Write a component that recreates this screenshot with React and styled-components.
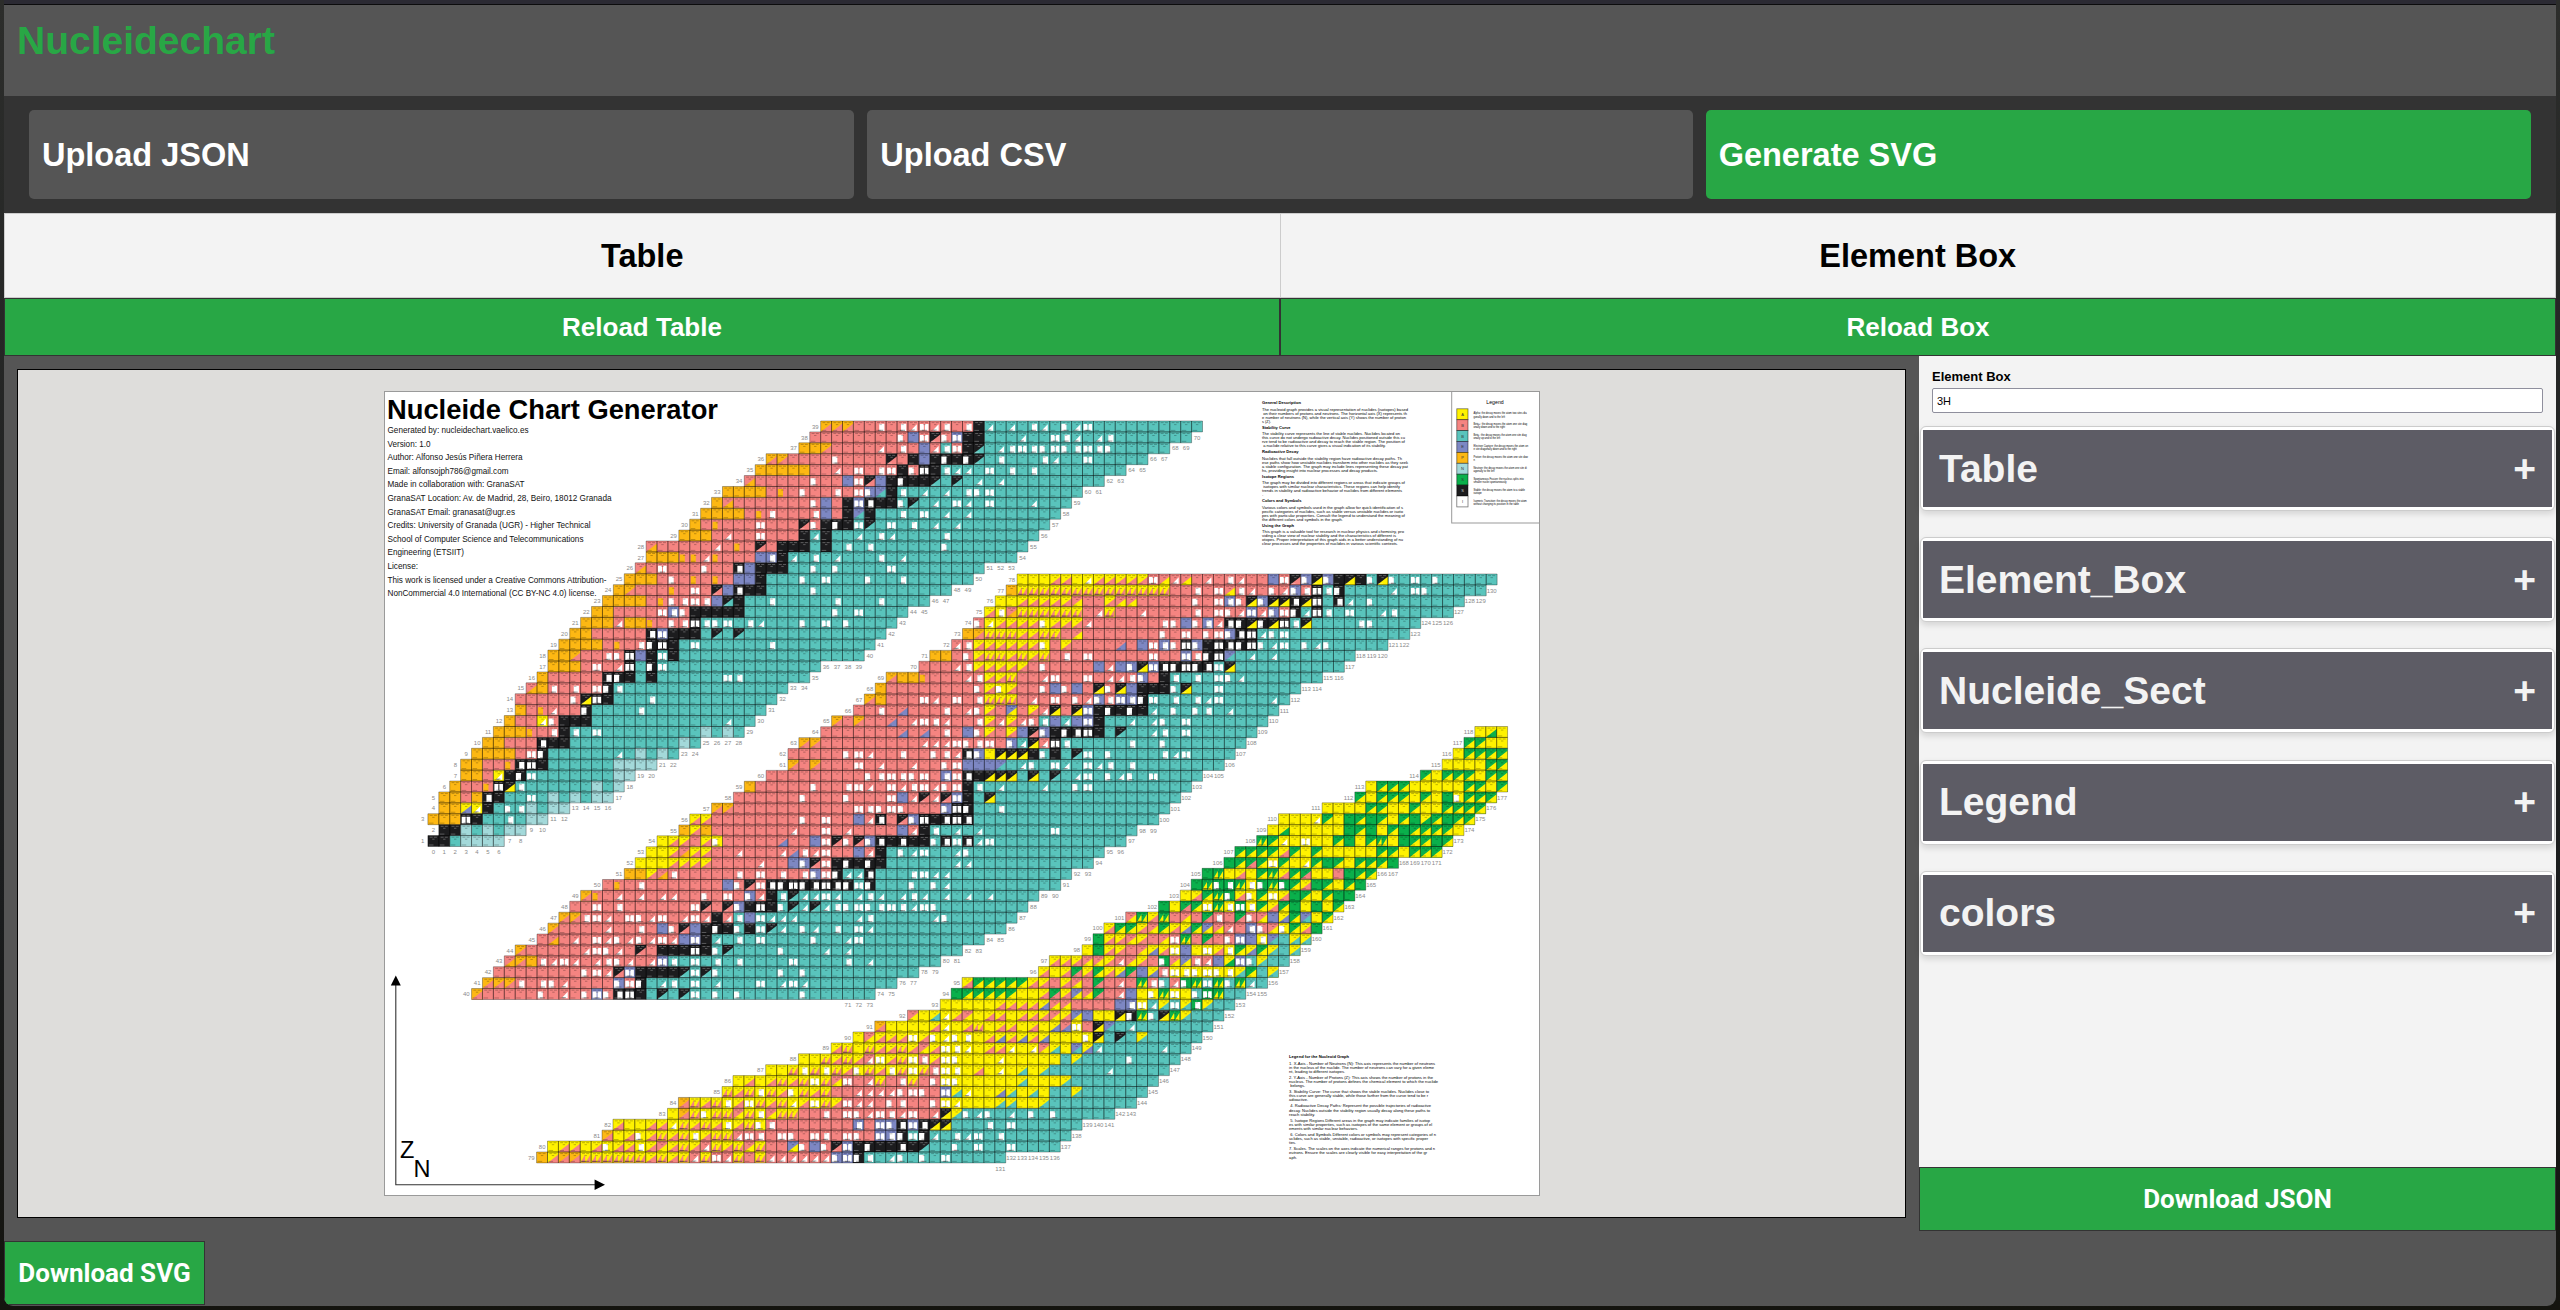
import React from 'react';
import styled, { createGlobalStyle } from 'styled-components';

const GlobalStyle = createGlobalStyle`
  * { box-sizing: border-box; }
  body {
    margin: 0;
    background: #1b1d1d;
    font-family: "Liberation Sans", Arial, sans-serif;
    overflow: hidden;
  }
`;

const Desktop = styled.div`
  width: 2560px;
  height: 1310px;
  padding: 0 4px 4px;
  background: linear-gradient(#2c2d2b, #1a1c1d 70%, #14140f);
`;
const Shell = styled.div`
  height: 1306px;
  display: flex;
  flex-direction: column;
  background: #555;
  border-top: 4px solid #2b2a33;
  border-radius: 0 0 9px 9px;
  overflow: hidden;
`;
const Header = styled.header`
  height: 92px;
  border-top: 1px solid #0c0c0d;
  padding: 14px 13px;
`;
const Brand = styled.h1`
  margin: 0;
  font-size: 39px;
  line-height: 44px;
  color: #28a745;
`;
const Toolbar = styled.div`
  height: 117px;
  padding: 14px 25px;
  background: #333;
  display: flex;
  gap: 13px;
`;
const ToolButton = styled.button`
  flex: 1;
  border: 0;
  border-radius: 5px;
  padding: 2px 13px 0;
  text-align: left;
  font: bold 32.5px "Liberation Sans", Arial, sans-serif;
  color: #fff;
  background: ${(p) => (p.$primary ? '#28a745' : '#555')};
`;
const Split = styled.div`
  display: flex;
`;
const Tab = styled.div`
  flex: 1;
  height: 85px;
  padding-top: 2px;
  border: 1px solid #ccc;
  border-left-width: ${(p) => (p.$joined ? 0 : 1)}px;
  background: #f3f3f3;
  display: flex;
  align-items: center;
  justify-content: center;
  font-size: 32.5px;
  font-weight: bold;
  color: #000;
`;
const ActionButton = styled.button`
  flex: ${(p) => (p.$fixed ? 'none' : 1)};
  width: ${(p) => p.$fixed || 'auto'};
  height: ${(p) => p.$height}px;
  padding: 0;
  border: 1px solid #333;
  background: #28a745;
  color: #fff;
  font-size: 26px;
  font-weight: bold;
  font-family: ${(p) => (p.$roboto ? 'Roboto, sans-serif' : '"Liberation Sans", Arial, sans-serif')};
`;
const Workspace = styled.main`
  display: flex;
  height: 875px;
`;
const CanvasArea = styled.section`
  width: 1915px;
  padding: 13px;
`;
const Canvas = styled.div`
  height: 849px;
  border: 1px solid #000;
  background: #dedddb;
  display: flex;
  align-items: center;
  justify-content: center;
`;
const Sheet = styled.svg`
  display: block;
  width: 1156px;
  height: 805px;
  background: #fff;
`;
const Sidebar = styled.aside`
  flex: 1;
  display: flex;
  flex-direction: column;
`;
const Panel = styled.div`
  height: 811px;
  padding: 13px 1px 0;
  background: #f3f3f3;
`;
const Field = styled.label`
  display: block;
  padding: 0 12px;
  font-size: 13px;
  line-height: 16px;
  font-weight: bold;
  color: #000;
`;
const TextInput = styled.input`
  display: block;
  width: 100%;
  height: 25px;
  margin: 3px 0 13px;
  padding: 1px 4px;
  border: 1px solid #8f8f9d;
  border-radius: 2px;
  background: #fff;
  font: 11px "Liberation Sans", Arial, sans-serif;
`;
const Section = styled.div`
  height: 85px;
  margin-bottom: 26.2px;
  padding: 3px 2px;
  border: 1px solid #ccc;
  border-radius: 6px;
  background: #fff;
  box-shadow: 0 3px 6px rgba(0, 0, 0, 0.13);
`;
const SectionHead = styled.div`
  height: 77px;
  padding: 0 16px;
  background: #5d5c65;
  color: #f3f3f3;
  display: flex;
  align-items: center;
  justify-content: space-between;
  font-size: 39px;
  font-weight: bold;
`;
const Footer = styled.footer`
  padding-top: 10px;
  display: flex;
`;

/* Chart data: proton number, first neutron number, last neutron number, run-length cells. */
const ROWS = `
1 0 6 K2TN4
2 1 8 K2NTNTN2
3 0 10 O3kKT2tTN2
4 1 12 O2bzKTt2NTN2
5 1 16 O2ROkKT2tTNTNTN2
6 2 17 OR2pkftT6NTN
7 3 18 O2RzKktT7N2
8 3 20 O2R2pk2KT6N4
9 4 22 O4RrkT6JTNTNT
10 5 24 O2R3kK2T10NT
11 6 28 O3pRrKtTtT9NTNT
12 7 29 OR2zrK3T12JT
13 8 30 ORpjR2kT4tT
14 8 31 R5rfkKT3tT
15 9 32 BOrRrRrktT
16 10 34 OR5k2KTKT6t2T
17 11 35 O3RrRjkTktT
18 11 39 O2AR2r2kEKtKT
19 12 40 O4RpRrk2KTtT6tT
20 13 41 O2R5keK3THTHT
21 14 42 O3jO2pRr2kt3TtJT3tTtTtT
22 15 43 O2R4rerK5T8tTtT
23 16 45 O4Rpr4EHKT2tT5tT3tT
24 17 47 OAR3pRrRFEkK2T4tT
25 18 49 O3RrRpRpRE2KT3tTtT3tT2tT
26 19 50 BRrR3rR2kEK3T2tTtT4tT
27 20 53 O3p2jpR3EeKJTtTJT3tTJT
28 20 54 BR5jRpRFRK3TKTtTtT6tT
29 23 55 O3RjR2rR3KJKT2JTtJT4tT
30 24 56 ORpR3rR3FrKkKtHTtTtTJTJT
31 25 57 O4RprR3rERKiKT2tTtTJTJT
32 26 58 OBR7rERKekK2tHTJTtJTtT3JT
33 27 59 O4RpRrR2rRreiKtTJU6T
34 29 61 BR5rR2ErFEKkK2HTHTJTJT
35 30 63 O5R2jRrRr2KrkKtJU5TtT
36 31 65 A2R4rR4FRKEKkKkHTtT3tJT2tT
37 34 67 O2AR4jRrREjtrKHTJU10T
38 35 69 R8rErFreKKT3JT2tU5T
39 36 70 A3R2rRrjrjrRrKJU9T
40 37 73 AR5rRjRrerk2KTHTHtTtTtT5tT
41 38 75 A3rRr2jR4erkTJtTtTJT3tTJtJT
42 39 77 R8r2jFeK4HtHtT5tTtT
43 40 79 BAOrjrjRjr2jRjetTtTtTtT4tT4tTJT
44 41 81 AR5jr2jRFRK3kKtHT4tT3JTJT
45 43 83 RBRjRrjrjrjrjEeKJTtTtT4tT2JtT
46 44 85 AR4jR2rRErFEKkKtKtHJTtJTtTtJT
47 45 86 A2SrjRr2jrRjrjKjtEtJU18T
48 46 87 R2rRrR6rFRFeKkKtHJHJU10T
49 47 88 ApRjRjRj2R2rRrRejKtHJU18T
50 49 90 RpRrR7ErFrk8tkU8T
51 51 91 O2CBrR5rRrRrRrerkU2kU10T
52 52 93 Y3C4R4jR2EeFrKkKkKU8T
53 53 94 Y2CBC2R2jR3jIrjrR2EjKU8T
54 54 96 YC2RCyR5IR2ErFrFekKkK2tktkU2T
55 56 97 OCOR7jR2rRjR4EjKtTJTJT6tT
56 57 99 C2R8rRrR2EjkRFekKk3T
57 59 100 A2R5S14ek2T2tT
58 61 101 R6rR3rR3rEjFjFeKTfT
59 62 102 OR5rR2rS10KtTJT3JT2t2T
60 64 103 R9S7erkKf3TfTHTJtTtJtTtT
61 66 105 ARAR3S9rE3iTJtTtJU7T
62 66 106 R5S10jkeYf3KtKTHtTtT4tJtT
63 67 107 A2R6S11eJfjktT5tT2tT
64 69 108 R7IRIRrRErCRCEFeKk3KTHT2JtTtT
65 70 109 ARAR2IRjS6CjCjrtEJEeKT2JTJtTtT
66 72 110 R2rRIR3rRSrCRvRCjfRfeKkKkKJTtTt2TJT
67 73 111 AOR2S7d3S7eSe2ktTtTtJtT4JT
68 74 112 OR6S3CyCRSrErERfrfEK3tfT2tT
69 75 114 AO2pR2S3C2dS11eRKtTtTt2JT
70 78 116 R3jrC5RSR4EjEefek5tfT
71 79 117 O2RrCd2CdCdS5R3S4erk2iU4T
72 81 120 jrC6yRCR4IRErerkeKk4tJtTtJtT
73 82 122 OAd3C2d2RDR7rRrRr2ek2U6T
74 83 123 rzC4yC3jR6r2Erejk2fkfktfU6T
75 84 126 CyBd6RjdR2jR4rRr2jejerkJkU8T
76 85 127 Y2C5DR2CD2R5rRrerfef2kfkTkU4T
77 86 129 Od14R2rRrDrjRrjerktkU8T
78 87 130 Y3C2YzC5rDjDRjRrjR2ErFefeKfKtftTtTtT
79 89 131 OCA2d6CdCdjdSjdRdS6e2ktTJtU4T
80 90 136 YC2YCyC2yCDCdCjdCdDdR2vrErFeKkK2kKHT2tTtT2tT
81 95 137 AYCyCdCdyCd2S13e2ktkJTtJtTtT
82 96 138 CY2C2zdCdCyCdyS8eSe2kekf2T3tTtT
83 101 141 YAdyd2DdyDd2S13fatU8T
84 102 143 AdCdyCydCdzCydCS9yzY3a2Y2aT
85 106 144 dCdydCydCdS10eazY2baYaYT2aT
86 107 145 YCYCdCdydDrRjdRrdRry2Y5aY3aT
87 110 146 Y2dydydCydCydydry2YCYzYaYaT5JT
88 113 147 Y2dCdCjyCdyrCy2Y3zY5TaT4tT
89 116 148 CdYdC2dCDCy2zYC2zYzDaYibJT5JT
90 118 149 YDC3yCyzy2YCbCbCbY3yfTHTaT
91 120 150 AY4CzYCdYC2YCYbIyRfiTJT
92 123 151 DYazCDYC2YC3DCvEY2fkMtfMaT
93 126 152 Y5C4bD2R4EeyJatahaT
94 127 153 GL5Y2CcCvDcRjEYyMyYthMT
95 128 155 CL5C2RCDRcRjRMrtjhMtMtMJT
96 135 156 CYCcCLCbcEbry6aLTa
97 136 157 C3D2CjDCRhDvrjEletaT
98 139 158 YGC2RDbCyEYyCyLbLaTa
99 140 159 GC2DCRDrMRcRreEyiTaa
100 141 160 CL2CDLCbLvDjRerDyLCG2
101 143 161 DMCMRDRcrRcrDEbLiYL
102 146 162 GYcLyMyhyLCLGYGYL
103 148 163 YCLMhCyLyCGLYLG2
104 149 164 GMhhMyhMhLCGLYLGL
105 150 165 GMYCYLMCLcY2RGL2
106 152 167 GLcLyLYzLGLYLL2G
107 153 171 L4CLYLYY4L2YL2
108 155 172 MLzYyY2LGYLMYGL2GL
109 156 173 YlY5GLGYLGL4YL
110 157 174 Y3zLYGLGLYLGlLGLL
111 161 175 Y4L2Y2LY2L4
112 164 176 LYL3YLYGyL3
113 165 177 YL3Y5L2YL
114 170 177 LYL3YL2
115 172 177 Y4L2
116 173 177 YL4
117 174 177 L2Y2
118 175 177 YlY`;

const COLORS = {
  O: '#fdb813', R: '#f58481', T: '#59c4bc', K: '#1c1c1e', E: '#7d87c3',
  Y: '#fff200', N: '#a3d9da', G: '#0ab04b', W: '#ffffff',
};
/* upper-left colour followed by lower-right colour */
const DIAGONALS = {
  A: 'OR', B: 'RO', C: 'YR', D: 'RY', F: 'KR', H: 'KT', I: 'RE', J: 'TW', j: 'RW',
  L: 'GY', l: 'YG', a: 'YT', b: 'YE', c: 'GR', f: 'KY', i: 'ET', v: 'EY', z: 'YW',
};
const STRIPED = { r: 'R', t: 'T', k: 'K', e: 'E', y: 'Y', h: 'G' };
const SCATTER = { S: 'RrRjrSrRjr', U: 'TtJTtTTJtT' };
const P = 10.91;

function originX(z) {
  if (z < 40) return 427.4;
  return z < 79 ? 67.4 : -434.9;
}
function rowTop(z) {
  if (z < 40) return 846 - z * P;
  return z < 79 ? 999 - (z - 39) * P : 1162.4 - (z - 78) * P;
}

function buildChart() {
  const fills = {};
  const order = ['R', 'T', 'O', 'Y', 'K', 'E', 'N', 'G', 'W'];
  order.forEach((k) => { fills[k] = [[], []]; });
  let grid = '';
  let ink = '';
  let lightInk = '';
  let faint = '';
  const labels = [];
  const f = (n) => n.toFixed(2);
  const rect = (c, layer, x, y, w, h) => {
    fills[c][layer].push(`M${f(x)} ${f(y)}h${f(w)}v${f(h)}h${f(-w)}z`);
  };
  const tri = (c, x, y, w, h) => {
    fills[c][1].push(`M${f(x + w)} ${f(y)}v${f(h)}h${f(-w)}z`);
  };
  const lastByRow = {};
  ROWS.trim().split('\n').forEach((line) => {
    const [zs, ss, es, code] = line.split(' ');
    const z = +zs;
    const start = +ss;
    const end = +es;
    lastByRow[z] = end;
    const cells = [];
    code.replace(/([A-Za-z])(\d*)/g, (m, ch, n) => {
      for (let i = 0; i < (n ? +n : 1); i += 1) cells.push(ch);
      return m;
    });
    const pad = cells[cells.length - 1] === 'T' || z < 96 ? 'T' : 'L';
    const y = rowTop(z);
    labels.push({ x: originX(z) + start * P - (z > 99 ? 6.3 : 5.3), y: y + 7.6, t: z });
    for (let n = start; n <= end; n += 1) {
      let c = cells[n - start] || pad;
      const x = originX(z) + n * P;
      if (SCATTER[c]) {
        c = SCATTER[c][(z * 7 + n * 13 + ((z * n) % 11)) % 10];
        if (c === 'S') c = 'R';
      }
      let base = c;
      if (COLORS[c]) rect(c, 0, x, y, P, P);
      else if (DIAGONALS[c]) {
        const [a, b] = DIAGONALS[c];
        base = a;
        rect(a, 0, x, y, P, P);
        if (b === 'W') {
          tri(b, x + 2.6, y + 3.2, P - 4.6, P - 4.4);
          faint += `M${f(x + 3)} ${f(y + 9)}h4`;
        } else tri(b, x, y + 2.4, P, P - 2.4);
      } else if (STRIPED[c]) {
        base = STRIPED[c];
        rect(base, 0, x, y, P, P);
        const wide = (z * 3 + n) % 3 === 0;
        if (wide) {
          rect('W', 1, x + 1, y + 3, 4, 6.6);
          rect('W', 1, x + 6, y + 3, 3.6, 6.6);
        } else rect('W', 1, x + ((n + z) % 2 ? 0.6 : 4), y + 2.8, 5.2, 7.2);
        faint += `M${f(x + 3)} ${f(y + 9.3)}h5`;
      } else if (c === 'p') {
        base = 'R';
        rect('R', 0, x, y, P, P);
        rect('O', 1, x + 1, y + 2.6, 5, 7.6);
      } else {
        const pair = c === 'M' ? ['G', 'Y'] : ['Y', 'R'];
        base = pair[0];
        rect(pair[0], 0, x, y, P, P);
        tri(pair[1], x + 0.3, y + 2.4, 4.6, 8);
        tri(pair[1], x + 5.4, y + 2.4, 4.8, 8);
        faint += `M${f(x + 1)} ${f(y + 9.4)}h8`;
      }
      grid += `M${f(x)} ${f(y)}h${P}v${P}h${-P}z`;
      const dash = `M${f(x + 1.8)} ${f(y + 1.6)}h3M${f(x + 6)} ${f(y + 1.6)}h3M${f(x + 4.3)} ${f(y + 3.6)}h2.4M${f(x + 1)} ${f(y + 9.4)}h4.6`;
      if (base === 'K') lightInk += dash;
      else ink += dash;
    }
  });
  [[1, 39, 0], [40, 78, 71], [79, 118, 131]].forEach(([z0, z1, firstLabel]) => {
    let next = firstLabel;
    for (let z = z0; z <= z1; z += 1) {
      for (; next <= lastByRow[z]; next += 1) {
        labels.push({ x: originX(z) + (next + 0.5) * P, y: rowTop(z) + P + 7.6, t: next });
      }
    }
  });
  return { fills, order, grid, ink, lightInk, faint, labels };
}
const CHART = buildChart();

const INFO = [
  ['Generated by: nucleidechart.vaelico.es', 141], ['Version: 1.0', 43],
  ['Author: Alfonso Jesús Piñera Herrera', 135], ['Email: alfonsojph786@gmail.com', 121],
  ['Made in collaboration with: GranaSAT', 137],
  ['GranaSAT Location: Av. de Madrid, 28, Beiro, 18012 Granada', 224],
  ['GranaSAT Email: granasat@ugr.es', 127.5],
  ['Credits: University of Granada (UGR) - Higher Technical', 203],
  ['School of Computer Science and Telecommunications', 196], ['Engineering (ETSIIT)', 76.5],
  ['License:', 30.5], ['This work is licensed under a Creative Commons Attribution-', 219],
  ['NonCommercial 4.0 International (CC BY-NC 4.0) license.', 209],
];

/* [baseline, width, text, bold] */
const NOTES = [
  [403.1, 39, 'General Description', 1],
  [410.1, 146, 'The nucleoid graph provides a visual representation of nuclides (isotopes) based'],
  [414.1, 145, ' on their numbers of protons and neutrons. The horizontal axis (X) represents th'],
  [418.1, 144, 'e number of neutrons (N), while the vertical axis (Y) shows the number of proton'],
  [422.1, 9, 's (Z).'],
  [428.1, 28.5, 'Stability Curve', 1],
  [434.1, 138, 'The stability curve represents the line of stable nuclides. Nuclides located on'],
  [438.1, 143, 'this curve do not undergo radioactive decay. Nuclides positioned outside this cu'],
  [442.1, 143, 'rve tend to be radioactive and decay to reach the stable region. The position of'],
  [446.1, 124, ' a nuclide relative to this curve gives a visual indication of its stability.'],
  [452.1, 36.5, 'Radioactive Decay', 1],
  [459.1, 140, 'Nuclides that fall outside the stability region have radioactive decay paths. Th'],
  [463.1, 146, 'ese paths show how unstable nuclides transform into other nuclides as they seek'],
  [467.1, 146, 'a stable configuration. The graph may include lines representing these decay pat'],
  [471.1, 116, 'hs, providing insight into nuclear processes and decay products.'],
  [477.1, 32, 'Isotope Regions', 1],
  [483.1, 143, 'The graph may be divided into different regions or areas that indicate groups of'],
  [487.1, 138, ' isotopes with similar nuclear characteristics. These regions can help identify'],
  [491.1, 140, 'trends in stability and radioactive behavior of nuclides from different elements'],
  [495.1, 1.5, '.'],
  [501.1, 39.5, 'Colors and Symbols', 1],
  [508.1, 141, 'Various colors and symbols used in the graph allow for quick identification of s'],
  [512.1, 141, 'pecific categories of nuclides, such as stable versus unstable nuclides or isoto'],
  [516.1, 143, 'pes with particular properties. Consult the legend to understand the meaning of'],
  [520.1, 81, 'the different colors and symbols in the graph.'],
  [526.1, 32, 'Using the Graph', 1],
  [532.1, 142, 'This graph is a valuable tool for research in nuclear physics and chemistry, pro'],
  [536.1, 134, 'viding a clear view of nuclear stability and the characteristics of different is'],
  [540.1, 141, 'otopes. Proper interpretation of this graph aids in a better understanding of nu'],
  [544.1, 136, 'clear processes and the properties of nuclides in various scientific contexts.'],
];
const AXIS_NOTES = [
  [1057, 60, 'Legend for the Nucleoid Graph', 1],
  [1064, 146, '1. X-Axis - Number of Neutrons (N): This axis represents the number of neutrons'],
  [1068, 145, 'in the nucleus of the nuclide. The number of neutrons can vary for a given eleme'],
  [1072, 56, 'nt, leading to different isotopes.'],
  [1078, 144, '2. Y-Axis - Number of Protons (Z): This axis shows the number of protons in the'],
  [1082, 149, 'nucleus. The number of protons defines the chemical element to which the nuclide'],
  [1086, 16, ' belongs.'],
  [1092, 140, '3. Stability Curve: The curve that shows the stable nuclides. Nuclides close to'],
  [1096, 139, 'this curve are generally stable, while those farther from the curve tend to be r'],
  [1100, 19, 'adioactive.'],
  [1106, 142, ' 4. Radioactive Decay Paths: Represent the possible trajectories of radioactive'],
  [1111, 141, 'decay. Nuclides outside the stability region usually decay along these paths to'],
  [1115, 26, 'reach stability.'],
  [1121, 141, ' 5. Isotope Regions Different areas in the graph may indicate families of isotop'],
  [1125, 143, 'es with similar properties, such as isotopes of the same element or groups of el'],
  [1129, 69, 'ements with similar nuclear behaviors.'],
  [1135, 147, ' 6. Colors and Symbols Different colors or symbols may represent categories of n'],
  [1139, 139, 'uclides, such as stable, unstable, radioactive, or isotopes with specific proper'],
  [1143, 7, 'ties.'],
  [1149, 146, '7. Scales. The scales on the axes indicate the numerical ranges for protons and n'],
  [1153, 138, 'eutrons. Ensure the scales are clearly visible for easy interpretation of the gr'],
  [1158, 8, 'aph.'],
];
const LEGEND = [
  ['Y', 'A', 'Alpha: the decay moves the atom two sites dia', 'gonally down and to the left'],
  ['R', 'B', 'Beta+: the decay moves the atom one site diag', 'onally down and to the right'],
  ['T', 'B', 'Beta-: the decay moves the atom one site diag', 'onally up and to the left'],
  ['E', 'E', 'Electron Capture: the decay moves the atom on', 'e site diagonally down and to the right'],
  ['O', 'P', 'Proton: the decay moves the atom one site dow', 'n'],
  ['N', 'N', 'Neutron: the decay moves the atom one site di', 'agonally to the left'],
  ['G', 'S', 'Spontaneous Fission: the nucleus splits into', 'smaller nuclei spontaneously'],
  ['K', 'S', 'Stable: the decay moves the atom to a stable', 'isotope'],
  ['W', 'I', 'Isomeric Transition: the decay moves the atom', 'without changing its position in the table'],
];

const Mono = styled.text`
  font-family: "Liberation Sans", Arial, sans-serif;
  font-size: ${(p) => p.$size}px;
  font-weight: ${(p) => (p.$bold ? 'bold' : 'normal')};
  fill: ${(p) => p.$fill || '#000'};
  white-space: pre;
`;

function Paragraphs({ x, lines }) {
  return lines.map(([y, w, t, bold]) => (
    <Mono key={y} x={x} y={y} $size={4.1} $bold={bold} textLength={w} lengthAdjust="spacingAndGlyphs">{t}</Mono>
  ));
}

function NuclideSheet() {
  return (
    <Sheet viewBox="383.5 390.5 1156 805">
      <rect x="384" y="391" width="1155" height="804" fill="#fff" stroke="#9a9a9a" />
      {[0, 1].map((layer) => CHART.order.map((c) => (
        <path key={c + layer} d={CHART.fills[c][layer].join('')} fill={COLORS[c]} />
      )))}
      <path d={CHART.faint} stroke="rgba(40,40,40,.4)" strokeWidth="1.2" />
      <path d={CHART.ink} stroke="rgba(0,0,0,.36)" strokeWidth="0.7" />
      <path d={CHART.lightInk} stroke="rgba(255,255,255,.4)" strokeWidth="0.7" />
      <path d={CHART.grid} fill="none" stroke="rgba(0,0,0,.46)" strokeWidth="0.7" />
      {CHART.labels.map((l) => (
        <Mono key={`${l.x}-${l.y}`} x={l.x} y={l.y} $size={6} $fill="#8a8a8a" textAnchor="middle">{l.t}</Mono>
      ))}
      <Mono x="386.5" y="418.4" $size={27} $bold textLength="331" lengthAdjust="spacingAndGlyphs">Nucleide Chart Generator</Mono>
      {INFO.map(([t, w], i) => (
        <Mono key={t} x="387" y={432.4 + i * 13.6} $size={8.6} $fill="#111" textLength={w} lengthAdjust="spacingAndGlyphs">{t}</Mono>
      ))}
      <Paragraphs x={1261.5} lines={NOTES} />
      <Paragraphs x={1288.6} lines={AXIS_NOTES} />
      <rect x="1451.2" y="391" width="87.8" height="131.5" fill="none" stroke="#999" />
      <Mono x="1494.5" y="403" $size={5.2} textAnchor="middle">Legend</Mono>
      {LEGEND.map(([c, s, a, b], i) => (
        <g key={a}>
          <rect x="1456.3" y={408.3 + i * 10.9} width="11.2" height="10.9" fill={COLORS[c]} stroke="rgba(0,0,0,.55)" strokeWidth=".8" />
          <Mono x="1462" y={415.2 + i * 10.9} $size={4} $fill={c === 'K' ? '#ccc' : '#333'} textAnchor="middle">{s}</Mono>
          <g transform={`translate(1473 ${413.8 + i * 10.9}) scale(0.74 1)`}>
            <Mono $size={3.5}>{a}</Mono>
            <Mono y="3.2" $size={3.5}>{b}</Mono>
          </g>
        </g>
      ))}
      <path d="M395.3 983V1184.3H596" fill="none" stroke="#333" strokeWidth="1.1" />
      <path d="M395.3 975l5 10h-10zM604.5 1184.3l-10.4-5.2v10.4z" fill="#000" />
      <Mono x="399.5" y="1157" $size={23.5}>Z</Mono>
      <Mono x="413" y="1176" $size={23.5}>N</Mono>
    </Sheet>
  );
}

const SECTIONS = ['Table', 'Element_Box', 'Nucleide_Sect', 'Legend', 'colors'];

export default function App() {
  return (
    <Desktop>
      <GlobalStyle />
      <Shell>
        <Header><Brand>Nucleidechart</Brand></Header>
        <Toolbar>
          <ToolButton>Upload JSON</ToolButton>
          <ToolButton>Upload CSV</ToolButton>
          <ToolButton $primary>Generate SVG</ToolButton>
        </Toolbar>
        <Split>
          <Tab>Table</Tab>
          <Tab $joined>Element Box</Tab>
        </Split>
        <Split>
          <ActionButton $height={58}>Reload Table</ActionButton>
          <ActionButton $height={58}>Reload Box</ActionButton>
        </Split>
        <Workspace>
          <CanvasArea>
            <Canvas><NuclideSheet /></Canvas>
          </CanvasArea>
          <Sidebar>
            <Panel>
              <Field>
                Element Box
                <TextInput defaultValue="3H" />
              </Field>
              {SECTIONS.map((name) => (
                <Section key={name}>
                  <SectionHead><span>{name}</span><span>+</span></SectionHead>
                </Section>
              ))}
            </Panel>
            <ActionButton $height={64} $roboto>Download JSON</ActionButton>
          </Sidebar>
        </Workspace>
        <Footer>
          <ActionButton $height={64} $fixed="201px" $roboto>Download SVG</ActionButton>
        </Footer>
      </Shell>
    </Desktop>
  );
}
